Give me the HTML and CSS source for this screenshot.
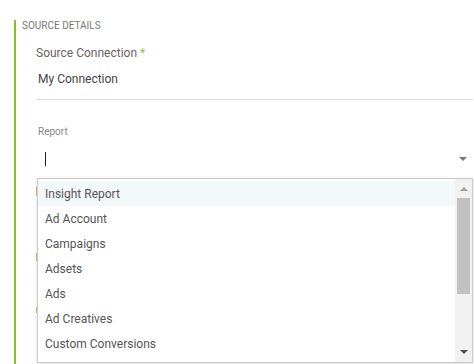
FILE: index.html
```html
<!DOCTYPE html>
<html lang="en">
<head>
    <meta charset="UTF-8">
    <meta name="viewport" content="width=device-width, initial-scale=1.0">
    <title>Source Details</title>
    <link rel="stylesheet" href="styles.css">
</head>
<body>
    <div class="panel">
        <div class="panel-title">Source Details</div>

        <div class="field">
            <div class="field-label">Source Connection <span class="required">*</span></div>
            <div class="field-value">My Connection</div>
        </div>

        <div class="field report-field">
            <div class="small-label">Report</div>
            <div class="select-box">
                <span class="caret"></span>
                <span class="select-arrow"></span>

                <div class="dropdown">
                    <ul class="dropdown-list">
                        <li class="active">Insight Report</li>
                        <li>Ad Account</li>
                        <li>Campaigns</li>
                        <li>Adsets</li>
                        <li>Ads</li>
                        <li>Ad Creatives</li>
                        <li>Custom Conversions</li>
                    </ul>
                    <div class="scrollbar">
                        <span class="scroll-up"></span>
                        <span class="scroll-thumb"></span>
                        <span class="scroll-down"></span>
                    </div>
                </div>
            </div>

            <!-- fields below, mostly hidden by the open dropdown -->
            <div class="stub stub-one"></div>
            <div class="stub stub-two"></div>
            <div class="stub-input"></div>
            <div class="stub stub-three"></div>
        </div>
    </div>
</body>
</html>
```

FILE: styles.css
```css
body {
    margin: 0;
    font-family: Roboto, "Liberation Sans", Arial, sans-serif;
    background-color: #fff;
}
.panel {
    margin: 20px 1px 0 14px;
    border-left: 2px solid #8cbf1e;
    padding-left: 6px;
    min-height: 344px;
}
.panel-title {
    font-size: 10px;
    line-height: 12px;
    color: #777;
    text-transform: uppercase;
}
.field {
    margin-left: 14px;
}
.field-label {
    margin-top: 13px;
    font-size: 12px;
    line-height: 16px;
    color: #6a625e;
}
.required {
    color: #8cc63f;
}
.field-value {
    margin-top: 10px;
    padding: 0 0 12px 2px;
    font-size: 12px;
    line-height: 16px;
    color: #444;
    border-bottom: 1px solid #ddd;
}
.report-field {
    position: relative;
}
.small-label {
    margin-top: 26px;
    padding-left: 2px;
    font-size: 10px;
    line-height: 12px;
    color: #888;
}
.select-box {
    position: relative;
    display: flex;
    align-items: center;
    justify-content: space-between;
    margin: 2px 0 0 1px;
    height: 38px;
    padding: 0 6px 0 8px;
    border-bottom: 1px solid #ddd;
}
.caret {
    width: 1px;
    height: 14px;
    background-color: #222;
}
.select-arrow {
    width: 0;
    height: 0;
    border-left: 4px solid transparent;
    border-right: 4px solid transparent;
    border-top: 4px solid #777;
}
.dropdown {
    position: absolute;
    top: 38px;
    left: 0;
    right: 0;
    height: 183px;
    display: flex;
    background-color: #fff;
    border: 1px solid #ccc;
    box-shadow: 0 1px 3px rgba(0,0,0,0.15);
    z-index: 2;
}
.dropdown-list {
    flex: 1;
    margin: 0;
    padding: 2px 0 0 0;
    list-style-type: none;
    overflow: hidden;
}
.dropdown-list li {
    height: 25px;
    line-height: 26px;
    padding-left: 7px;
    font-size: 12px;
    color: #555;
}
.dropdown-list li.active {
    background-color: #f3f8fb;
}
.scrollbar {
    width: 15px;
    display: flex;
    flex-direction: column;
    align-items: center;
    padding: 0 1px;
    background-color: #f1f1f1;
}
.scroll-up {
    margin-top: 8px;
    width: 0;
    height: 0;
    border-left: 4px solid transparent;
    border-right: 4px solid transparent;
    border-bottom: 4px solid #a3a3a3;
}
.scroll-thumb {
    margin-top: 7px;
    width: 13px;
    height: 96px;
    background-color: #c1c1c1;
}
.scroll-down {
    margin-top: auto;
    margin-bottom: 8px;
    width: 0;
    height: 0;
    border-left: 4px solid transparent;
    border-right: 4px solid transparent;
    border-top: 4px solid #505050;
}
.stub {
    width: 0;
    border-left: 2px solid #f0b46a;
}
.stub-one {
    margin-top: 8px;
    height: 9px;
}
.stub-two {
    margin-top: 57px;
    height: 8px;
}
.stub-input {
    margin: 9px 0 0 1px;
    height: 35px;
    border-left: 1px solid #ddd;
}
.stub-three {
    margin-top: 2px;
    height: 6px;
}
```
